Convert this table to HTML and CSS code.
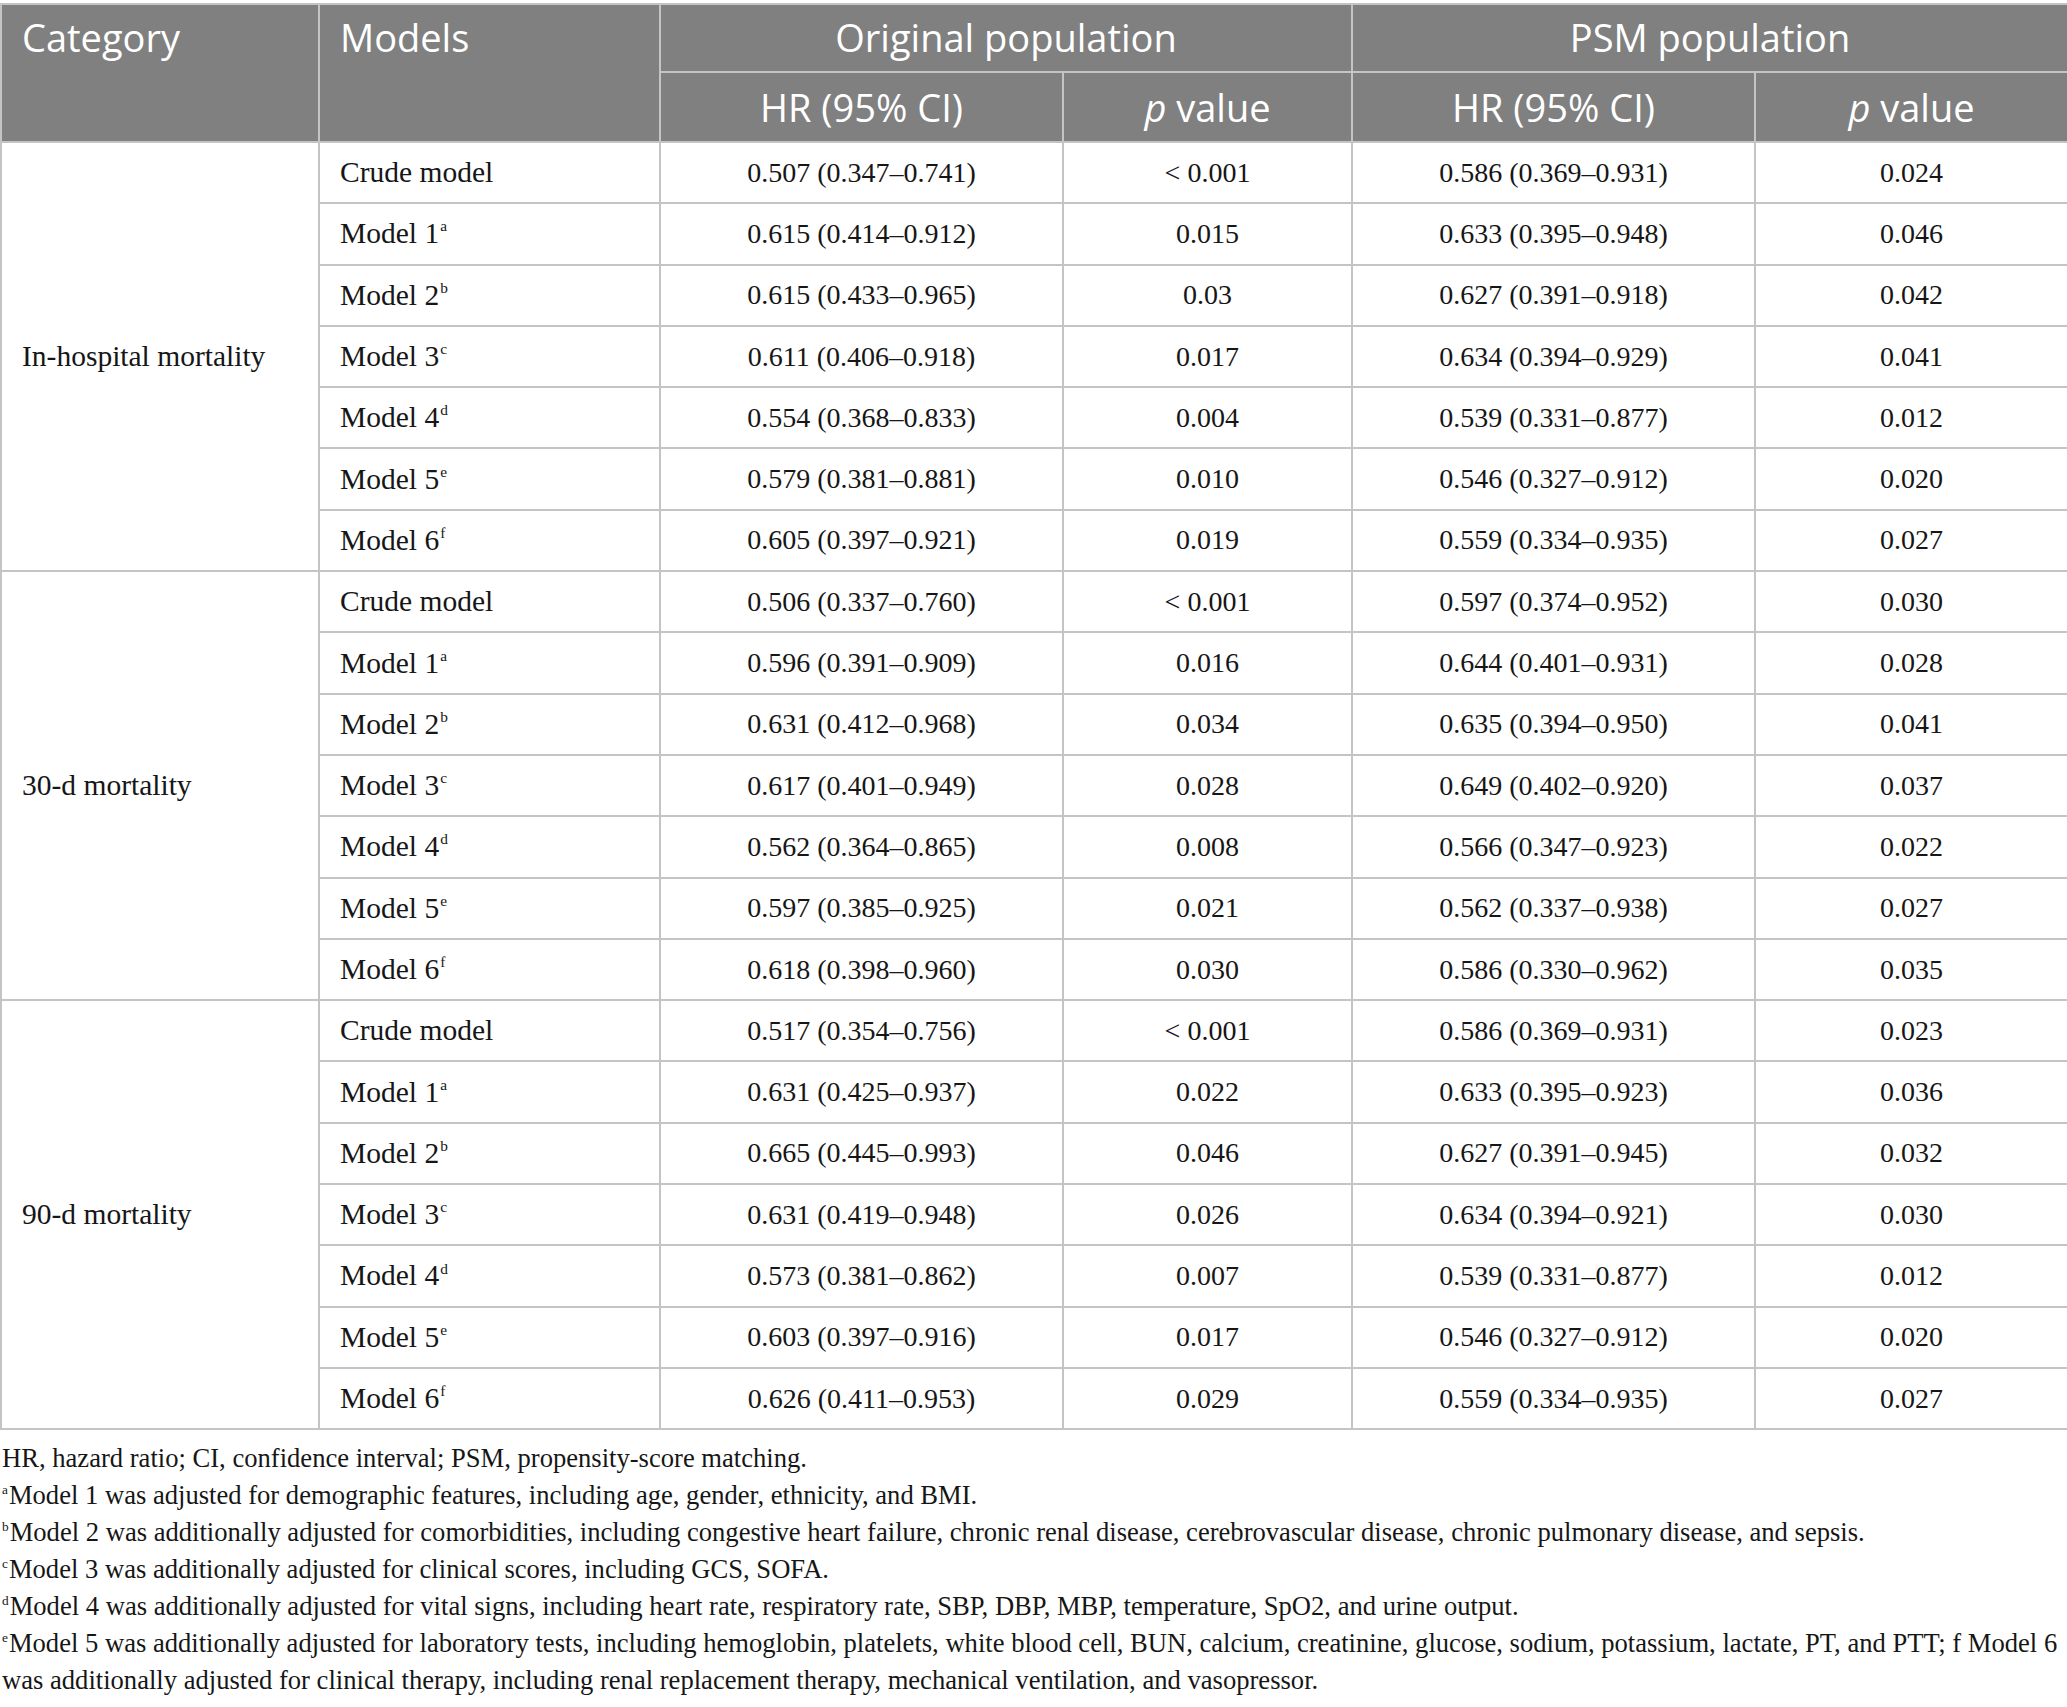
FILE: index.html
```html
<!DOCTYPE html>
<html>
<head>
<meta charset="utf-8">
<link rel="stylesheet" href="styles.css">
</head>
<body>
<table class="hr-table">
  <colgroup>
    <col class="c-cat"><col class="c-model"><col class="c-hr1"><col class="c-p1"><col class="c-hr2"><col class="c-p2">
  </colgroup>
  <thead>
    <tr class="h1">
      <th class="left" rowspan="2">Category</th>
      <th class="left" rowspan="2">Models</th>
      <th colspan="2">Original population</th>
      <th colspan="2">PSM population</th>
    </tr>
    <tr class="h2">
      <th>HR (95% CI)</th>
      <th><i>p</i> value</th>
      <th>HR (95% CI)</th>
      <th><i>p</i> value</th>
    </tr>
  </thead>
  <tbody>
    <tr><td class="cat" rowspan="7">In-hospital mortality</td><td class="model">Crude model</td><td>0.507 (0.347–0.741)</td><td>&lt; 0.001</td><td>0.586 (0.369–0.931)</td><td>0.024</td></tr>
    <tr><td class="model">Model 1<sup>a</sup></td><td>0.615 (0.414–0.912)</td><td>0.015</td><td>0.633 (0.395–0.948)</td><td>0.046</td></tr>
    <tr><td class="model">Model 2<sup>b</sup></td><td>0.615 (0.433–0.965)</td><td>0.03</td><td>0.627 (0.391–0.918)</td><td>0.042</td></tr>
    <tr><td class="model">Model 3<sup>c</sup></td><td>0.611 (0.406–0.918)</td><td>0.017</td><td>0.634 (0.394–0.929)</td><td>0.041</td></tr>
    <tr><td class="model">Model 4<sup>d</sup></td><td>0.554 (0.368–0.833)</td><td>0.004</td><td>0.539 (0.331–0.877)</td><td>0.012</td></tr>
    <tr><td class="model">Model 5<sup>e</sup></td><td>0.579 (0.381–0.881)</td><td>0.010</td><td>0.546 (0.327–0.912)</td><td>0.020</td></tr>
    <tr><td class="model">Model 6<sup>f</sup></td><td>0.605 (0.397–0.921)</td><td>0.019</td><td>0.559 (0.334–0.935)</td><td>0.027</td></tr>

    <tr><td class="cat" rowspan="7">30-d mortality</td><td class="model">Crude model</td><td>0.506 (0.337–0.760)</td><td>&lt; 0.001</td><td>0.597 (0.374–0.952)</td><td>0.030</td></tr>
    <tr><td class="model">Model 1<sup>a</sup></td><td>0.596 (0.391–0.909)</td><td>0.016</td><td>0.644 (0.401–0.931)</td><td>0.028</td></tr>
    <tr><td class="model">Model 2<sup>b</sup></td><td>0.631 (0.412–0.968)</td><td>0.034</td><td>0.635 (0.394–0.950)</td><td>0.041</td></tr>
    <tr><td class="model">Model 3<sup>c</sup></td><td>0.617 (0.401–0.949)</td><td>0.028</td><td>0.649 (0.402–0.920)</td><td>0.037</td></tr>
    <tr><td class="model">Model 4<sup>d</sup></td><td>0.562 (0.364–0.865)</td><td>0.008</td><td>0.566 (0.347–0.923)</td><td>0.022</td></tr>
    <tr><td class="model">Model 5<sup>e</sup></td><td>0.597 (0.385–0.925)</td><td>0.021</td><td>0.562 (0.337–0.938)</td><td>0.027</td></tr>
    <tr><td class="model">Model 6<sup>f</sup></td><td>0.618 (0.398–0.960)</td><td>0.030</td><td>0.586 (0.330–0.962)</td><td>0.035</td></tr>

    <tr><td class="cat" rowspan="7">90-d mortality</td><td class="model">Crude model</td><td>0.517 (0.354–0.756)</td><td>&lt; 0.001</td><td>0.586 (0.369–0.931)</td><td>0.023</td></tr>
    <tr><td class="model">Model 1<sup>a</sup></td><td>0.631 (0.425–0.937)</td><td>0.022</td><td>0.633 (0.395–0.923)</td><td>0.036</td></tr>
    <tr><td class="model">Model 2<sup>b</sup></td><td>0.665 (0.445–0.993)</td><td>0.046</td><td>0.627 (0.391–0.945)</td><td>0.032</td></tr>
    <tr><td class="model">Model 3<sup>c</sup></td><td>0.631 (0.419–0.948)</td><td>0.026</td><td>0.634 (0.394–0.921)</td><td>0.030</td></tr>
    <tr><td class="model">Model 4<sup>d</sup></td><td>0.573 (0.381–0.862)</td><td>0.007</td><td>0.539 (0.331–0.877)</td><td>0.012</td></tr>
    <tr><td class="model">Model 5<sup>e</sup></td><td>0.603 (0.397–0.916)</td><td>0.017</td><td>0.546 (0.327–0.912)</td><td>0.020</td></tr>
    <tr><td class="model">Model 6<sup>f</sup></td><td>0.626 (0.411–0.953)</td><td>0.029</td><td>0.559 (0.334–0.935)</td><td>0.027</td></tr>
  </tbody>
</table>
<div class="notes">
  <p>HR, hazard ratio; CI, confidence interval; PSM, propensity-score matching.</p>
  <p><sup>a</sup>Model 1 was adjusted for demographic features, including age, gender, ethnicity, and BMI.</p>
  <p><sup>b</sup>Model 2 was additionally adjusted for comorbidities, including congestive heart failure, chronic renal disease, cerebrovascular disease, chronic pulmonary disease, and sepsis.</p>
  <p><sup>c</sup>Model 3 was additionally adjusted for clinical scores, including GCS, SOFA.</p>
  <p><sup>d</sup>Model 4 was additionally adjusted for vital signs, including heart rate, respiratory rate, SBP, DBP, MBP, temperature, SpO2, and urine output.</p>
  <p><sup>e</sup>Model 5 was additionally adjusted for laboratory tests, including hemoglobin, platelets, white blood cell, BUN, calcium, creatinine, glucose, sodium, potassium, lactate, PT, and PTT; f Model 6<br>was additionally adjusted for clinical therapy, including renal replacement therapy, mechanical ventilation, and vasopressor.</p>
</div>
</body>
</html>
```

FILE: styles.css
```css
html, body {
  margin: 0;
  padding: 0;
  background: #ffffff;
}
body {
  padding-top: 3px;
  color: #161616;
  font-family: "Liberation Serif", "Times New Roman", serif;
  overflow-x: hidden;
}
.hr-table {
  width: 2067px;
  table-layout: fixed;
  border-collapse: collapse;
  font-size: 28px;
}
.c-cat { width: 318px; }
.c-model { width: 341px; }
.c-hr1 { width: 403px; }
.c-p1 { width: 289px; }
.c-hr2 { width: 403px; }
.c-p2 { width: 313px; }

.hr-table th,
.hr-table td {
  border: 2px solid #c4c4c4;
  padding: 0 20px;
  text-align: center;
  white-space: nowrap;
}
.hr-table thead th {
  background: #808080;
  color: #ffffff;
  font-family: "Open Sans", "Noto Sans", sans-serif;
  font-weight: 400;
  font-size: 38px;
  line-height: 1.36;
  vertical-align: top;
}
.hr-table thead th.left {
  text-align: left;
}
.hr-table thead .h1 { height: 68px; }
.hr-table thead .h1 th { padding-top: 7px; }
.hr-table thead .h2 { height: 70px; }
.hr-table thead .h2 th { vertical-align: middle; padding-top: 2px; }
.hr-table thead th i { font-style: italic; }

.hr-table tbody tr { height: 61.3px; }
.hr-table td.model,
.hr-table td.cat {
  text-align: left;
  font-size: 29.5px;
}
.hr-table td.cat { vertical-align: middle; }
sup {
  font-size: 0.52em;
  vertical-align: 0.78em;
  line-height: 0;
  margin-left: 1px;
}
.notes {
  margin-top: 10px;
  font-size: 26.6px;
  line-height: 37px;
  padding-left: 2px;
  white-space: nowrap;
}
.notes p { margin: 0; }
.notes sup { font-size: 0.5em; vertical-align: 0.75em; margin-left: 0; margin-right: 1px; }
```
